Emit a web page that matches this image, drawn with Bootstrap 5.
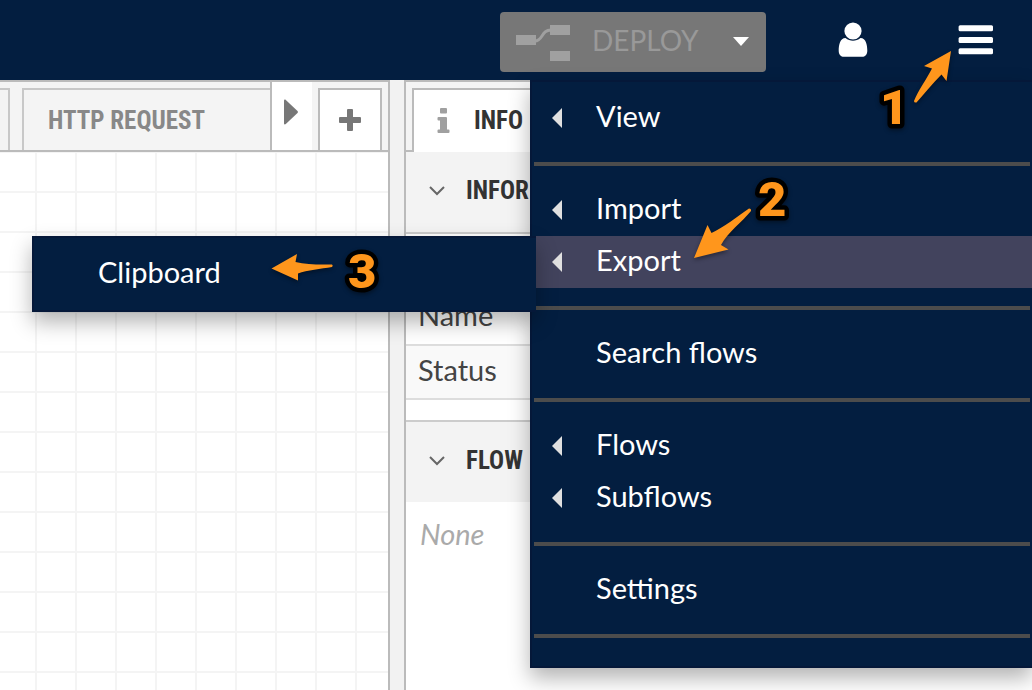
<!DOCTYPE html>
<html lang="en">
<head>
<meta charset="utf-8">
<meta name="viewport" content="width=device-width, initial-scale=1">
<title>Flow editor</title>
<link rel="stylesheet" href="https://cdn.jsdelivr.net/npm/bootstrap@5.3.0/dist/css/bootstrap.min.css">
<style>
  :root { --navy: #031e40; --navy-edge: #051839; --line: #bbb; --pale: #f3f3f3; }
  body { font-family: Lato, "Open Sans", sans-serif; font-size: 29px; line-height: 52px; color: #444; }
  .narrow { font-family: "Roboto Condensed", "Open Sans Condensed", Roboto, sans-serif; font-size: 25px; font-weight: 700; }
  .topbar { height: 80px; background: var(--navy); padding: 0 38px 0 0; }
  .deploy { height: 60px; width: 266px; padding: 0 16px; background: #777; color: #999; border: 0; border-radius: 4px; font-size: 28px; line-height: 52px; }
  .deploy span { padding: 0 0 4px 22px; }
  .icon-btn { border: 0; padding: 0; background: none; color: #fff; line-height: 0; }
  .btn-user { margin: 0 66px 0 72px; }
  .workspace { border: solid var(--line); border-width: 2px 2px 0 0; min-width: 0; }
  .strip { height: 70px; background: #f4f4f4; border-bottom: 2px solid var(--line); }
  .strip-tab { border: 2px solid #c8c8c8; border-bottom: 0; margin-top: 6px; color: #888; text-decoration: none; line-height: 62px; background: #f4f4f4; }
  .tab-prev { width: 10px; border-left: 0; margin-right: 12px; }
  .tab-http { border-right: 0; padding-left: 24px; }
  .strip-scroll { width: 42px; height: 70px; border: solid var(--line); border-width: 0 0 2px 2px; background: #fff; padding: 0 2px 8px 0; margin-right: 6px; line-height: 0; }
  .strip-add { width: 64px; margin: 6px 6px 0 0; border: 2px solid var(--line); border-bottom: 0; background: #fff; padding: 0; line-height: 0; }
  .canvas {
    background-color: #fff;
    background-image: linear-gradient(90deg, #f4f4f4 2px, transparent 2px), linear-gradient(#f4f4f4 2px, transparent 2px);
    background-size: 40px 40px; background-position: 35px 39px;
  }
  .splitter { width: 14px; background: #f2f2f2; }
  .sidebar { width: 628px; border: solid var(--line); border-width: 2px 0 0 2px; background: #fff; }
  .info-tab { height: 64px; width: 240px; margin-left: 6px; padding-left: 23px; background: #fff; color: #333; border-color: var(--line); gap: 23px; }
  .section-head { height: 80px; width: 100%; padding: 0 0 2px 23px; gap: 21px; border: 0; background: var(--pale); color: #333; text-align: left; }
  .section-info { height: 82px; border-bottom: 2px solid #ccc; }
  .section-flow { height: 82px; border-top: 2px solid #ccc; margin-top: 20px; }
  .props { margin-top: 57px; }
  .props th { font-weight: 400; padding: 0 12px; border-bottom: 2px solid #ddd; height: 54px; line-height: 48px; vertical-align: top; }
  .props tr + tr th { background: #f9f9f9; }
  .empty { color: #aaa; padding: 6px 14px; }
  .flow-menu {
    background: var(--navy); border: 2px solid var(--navy-edge); border-right: 0; padding: 10px 0;
    box-shadow: 0 10px 20px rgba(0, 0, 0, .3); list-style: none; margin: 0;
  }
  .main-menu { top: 80px; right: 0; width: 502px; z-index: 10; }
  .sub-menu { top: 0; right: calc(100% - 4px); width: 504px; }
  .flow-menu a { display: flex; align-items: center; height: 52px; color: #fff; text-decoration: none; padding: 0 0 4px 64px; }
  .flow-menu a.parent { padding-left: 20px; gap: 34px; }
  .flow-menu a.parent svg { margin-top: 4px; }
  .flow-menu a.chosen { background: #42435d; }
  .rule { height: 4px; margin: 18px 2px; background: #4c4c4c; }
  .callouts { top: 0; right: 0; z-index: 20; pointer-events: none; filter: drop-shadow(0 2px 2px rgba(0, 0, 0, .4)); }
  .callouts text { font: 900 49px Roboto, "Liberation Sans", sans-serif; fill: #ff961c; stroke: #000; stroke-width: 9px; stroke-linejoin: round; paint-order: stroke; }
</style>
<script src="https://cdn.jsdelivr.net/npm/bootstrap@5.3.0/dist/js/bootstrap.bundle.min.js"></script>
</head>
<body>
<div class="d-flex flex-column vh-100 position-relative overflow-hidden">
  <header class="topbar d-flex align-items-center justify-content-end flex-shrink-0">
    <button type="button" class="deploy d-flex align-items-center mt-1">
      <svg width="54" height="38" viewBox="0 0 54 38" fill="#a0a0a0" aria-hidden="true"><path d="M0 12h20v10H0zM34 2h20v10H34zM34 28h20v10H34z"/><path d="M19 18c8 0 6-11 16-11" fill="none" stroke="#a0a0a0" stroke-width="3"/></svg>
      <span class="flex-grow-1 text-start">DEPLOY</span>
      <svg width="18" height="10" viewBox="0 0 18 10" fill="#fff" aria-hidden="true"><path d="M1 0h16L9 9z"/></svg>
    </button>
    <button type="button" class="icon-btn btn-user" aria-label="User">
      <svg width="30" height="36" viewBox="0 0 30 36" fill="currentColor" aria-hidden="true"><circle cx="15" cy="9" r="8.6"/><path d="M7.500 16C2 16 .7 23 .7 28.500c0 4 2 6.300 5.300 6.300h18c3.300 0 5.300-2.300 5.300-6.300C29.300 23 28 16 22.500 16 18 19.500 12 19.500 7.500 16z"/></svg>
    </button>
    <button type="button" class="icon-btn ms-4" aria-label="Main menu">
      <svg width="36" height="30" viewBox="0 0 36 30" fill="currentColor" aria-hidden="true"><rect x=".6" y=".3" width="34.400" height="6" rx="1.500"/><rect x=".6" y="12" width="34.400" height="6" rx="1.500"/><rect x=".6" y="23.300" width="34.400" height="6" rx="1.500"/></svg>
    </button>
  </header>

  <main class="d-flex flex-grow-1">
    <section class="workspace d-flex flex-column flex-grow-1">
      <div class="strip d-flex">
        <a href="#" class="strip-tab tab-prev" aria-label="Previous flow"></a>
        <a href="#" class="strip-tab tab-http narrow flex-grow-1">HTTP REQUEST</a>
        <button type="button" class="strip-scroll" aria-label="Scroll tabs">
          <svg width="16" height="26" viewBox="0 0 16 26" fill="#777" aria-hidden="true"><path d="M1 1.500C1 .5 2 .3 2.800 1L14.500 12Q15.500 13 14.500 14L2.800 25C2 25.700 1 25.500 1 24.500z"/></svg>
        </button>
        <button type="button" class="strip-add" aria-label="Add flow">
          <svg width="22" height="22" viewBox="0 0 22 22" fill="#777" aria-hidden="true"><rect x="8" width="6" height="22" rx="1"/><rect y="8" width="22" height="6" rx="1"/></svg>
        </button>
      </div>
      <div class="canvas flex-grow-1"></div>
    </section>
    <div class="splitter flex-shrink-0"></div>
    <aside class="sidebar flex-shrink-0">
      <div class="strip d-flex">
        <a href="#" class="strip-tab info-tab narrow d-flex align-items-center">
          <svg width="14" height="26" viewBox="0 0 14 26" fill="#a0a0a0" aria-hidden="true"><rect x="3" y="0" width="7" height="5.500" rx="1"/><path d="M1.500 9H9q1 0 1 1v11.500h1.500q1 0 1 1V24q0 1-1 1h-10q-1 0-1-1v-1.500q0-1 1-1H3v-9H1.500q-1 0-1-1V10q0-1 1-1z"/></svg>
          <span>INFO</span>
        </a>
      </div>
      <button type="button" class="section-head section-info narrow d-flex align-items-center">
        <svg width="16" height="10" viewBox="0 0 16 10" fill="none" stroke="#666" stroke-width="2" aria-hidden="true"><path d="M1 1l7 7 7-7"/></svg>
        <span>INFOR</span>
      </button>
      <table class="props w-100">
        <tbody>
          <tr><th scope="row">Name</th></tr>
          <tr><th scope="row">Status</th></tr>
        </tbody>
      </table>
      <button type="button" class="section-head section-flow narrow d-flex align-items-center">
        <svg width="16" height="10" viewBox="0 0 16 10" fill="none" stroke="#666" stroke-width="2" aria-hidden="true"><path d="M1 1l7 7 7-7"/></svg>
        <span>FLOW</span>
      </button>
      <div class="empty fst-italic">None</div>
    </aside>
  </main>

  <ul class="flow-menu main-menu position-absolute">
    <li><a href="#" class="parent"><svg width="10" height="20" fill="#e0e0e0" aria-hidden="true"><path d="M10 0v20L0 10z"/></svg>View</a></li>
    <li class="rule" role="separator"></li>
    <li><a href="#" class="parent"><svg width="10" height="20" fill="#e0e0e0" aria-hidden="true"><path d="M10 0v20L0 10z"/></svg>Import</a></li>
    <li class="position-relative">
      <a href="#" class="parent chosen"><svg width="10" height="20" fill="#e0e0e0" aria-hidden="true"><path d="M10 0v20L0 10z"/></svg>Export</a>
      <ul class="flow-menu sub-menu position-absolute">
        <li><a href="#">Clipboard</a></li>
      </ul>
    </li>
    <li class="rule" role="separator"></li>
    <li><a href="#">Search flows</a></li>
    <li class="rule" role="separator"></li>
    <li><a href="#" class="parent"><svg width="10" height="20" fill="#e0e0e0" aria-hidden="true"><path d="M10 0v20L0 10z"/></svg>Flows</a></li>
    <li><a href="#" class="parent"><svg width="10" height="20" fill="#e0e0e0" aria-hidden="true"><path d="M10 0v20L0 10z"/></svg>Subflows</a></li>
    <li class="rule" role="separator"></li>
    <li><a href="#">Settings</a></li>
    <li class="rule" role="separator"></li>
  </ul>

  <!-- numbered steps, anchored to the right edge like the menus they point at -->
  <svg class="callouts position-absolute" width="1032" height="320" viewBox="0 0 1032 320">
    <g fill="#ff961c">
      <path d="M951 51L924 66l8 2.500C926 80 918 91 914 101q0 2 2.500 1.500C924 94 933 83 941.500 74.500l5 6.500z"/>
      <path d="M694 258l13.500-33 4 8C723 228 738 216 749 208.500q2.500 0 2 2.500C742 222 728 232 721 245l7.500 4.500z"/>
      <path d="M271.500 268.500L297 254l-1.500 8c11 3 25 2.500 36.500 2.500q1.500 1.200 0 2.500C321 269 307 270 298 273.500l0 7z"/>
    </g>
    <text x="880" y="124">1</text>
    <text x="758" y="216">2</text>
    <text x="348" y="288">3</text>
  </svg>
</div>
</body>
</html>
